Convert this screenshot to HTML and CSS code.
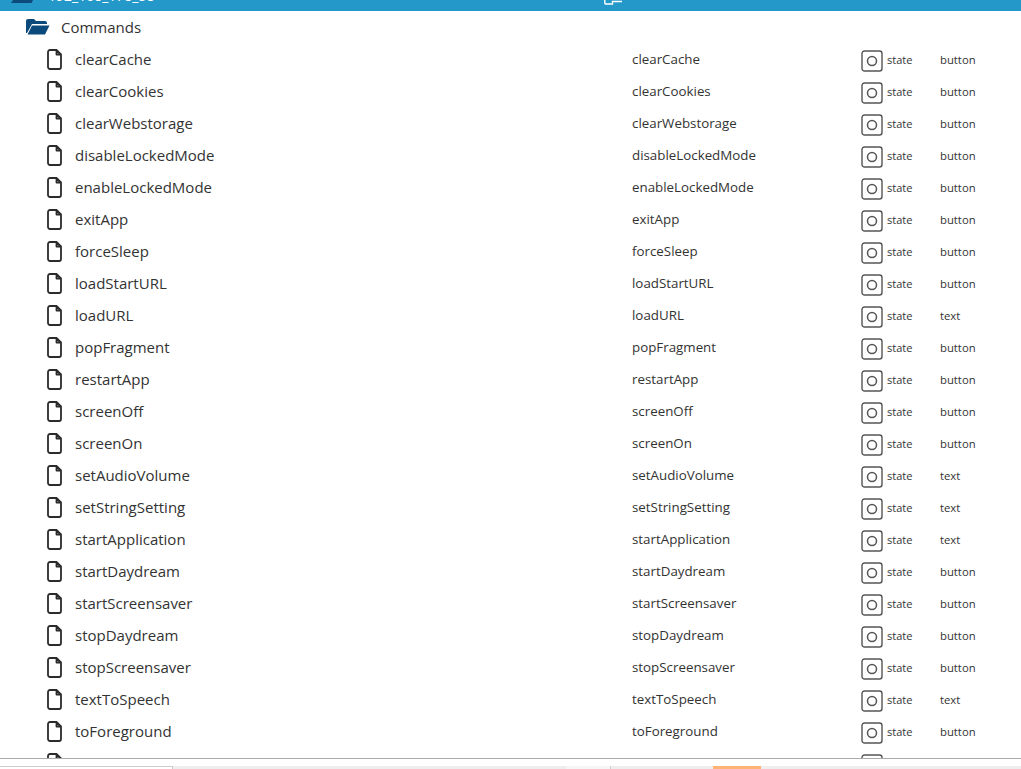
FILE: index.html
```html
<!DOCTYPE html>
<html lang="en">
<head>
<meta charset="utf-8">
<title>Commands</title>
<link rel="stylesheet" href="styles.css">
</head>
<body>
<svg class="defs" width="0" height="0">
  <symbol id="file" viewBox="0 0 15 21"><path d="M3 1H9.500L14 5.500V18A2 2 0 0 1 12 20H3A2 2 0 0 1 1 18V3A2 2 0 0 1 3 1Z M9.500 1V5.500H14" fill="none" stroke="#2b2b2b" stroke-width="1.8" stroke-linejoin="round"/></symbol>
  <symbol id="stateicon" viewBox="0 0 22 22"><rect x="1" y="1" width="20" height="20" rx="2.5" fill="none" stroke="#555" stroke-width="1.4"/><circle cx="11" cy="11" r="4.5" fill="none" stroke="#555" stroke-width="1.5"/></symbol>
</svg>
<header class="topbar">
  <svg class="top-folder" viewBox="0 0 23 3"><path d="M3 0H23L21.500 3H1Z" fill="#0d4a7c"/></svg>
  <span class="top-id">192_168_178_58</span>
  <svg class="top-copy" viewBox="0 0 18 5"><path d="M.8 0V3A1 1 0 0 0 1.800 4H8.500V1.500H18" fill="none" stroke="#fff" stroke-width="1.400"/></svg>
</header>
<main class="tree">
  <div class="folder-row">
    <svg class="folder-icon" viewBox="0 0 25 18"><path d="M1 15V3A2 2 0 0 1 3 1H9L11 3H20A2 2 0 0 1 22 5V6H7L2 15Z" fill="#0d4a7c"/><path d="M7 7.500H24.500L20 16.500H2.500Z" fill="#0d4a7c"/></svg>
    <span>Commands</span>
  </div>
  <div class="row"><svg class="file"><use href="#file"/></svg><span class="name">clearCache</span><span class="title">clearCache</span><svg class="state-icon"><use href="#stateicon"/></svg><span class="role">state</span><span class="type">button</span></div>
  <div class="row"><svg class="file"><use href="#file"/></svg><span class="name">clearCookies</span><span class="title">clearCookies</span><svg class="state-icon"><use href="#stateicon"/></svg><span class="role">state</span><span class="type">button</span></div>
  <div class="row"><svg class="file"><use href="#file"/></svg><span class="name">clearWebstorage</span><span class="title">clearWebstorage</span><svg class="state-icon"><use href="#stateicon"/></svg><span class="role">state</span><span class="type">button</span></div>
  <div class="row"><svg class="file"><use href="#file"/></svg><span class="name">disableLockedMode</span><span class="title">disableLockedMode</span><svg class="state-icon"><use href="#stateicon"/></svg><span class="role">state</span><span class="type">button</span></div>
  <div class="row"><svg class="file"><use href="#file"/></svg><span class="name">enableLockedMode</span><span class="title">enableLockedMode</span><svg class="state-icon"><use href="#stateicon"/></svg><span class="role">state</span><span class="type">button</span></div>
  <div class="row"><svg class="file"><use href="#file"/></svg><span class="name">exitApp</span><span class="title">exitApp</span><svg class="state-icon"><use href="#stateicon"/></svg><span class="role">state</span><span class="type">button</span></div>
  <div class="row"><svg class="file"><use href="#file"/></svg><span class="name">forceSleep</span><span class="title">forceSleep</span><svg class="state-icon"><use href="#stateicon"/></svg><span class="role">state</span><span class="type">button</span></div>
  <div class="row"><svg class="file"><use href="#file"/></svg><span class="name">loadStartURL</span><span class="title">loadStartURL</span><svg class="state-icon"><use href="#stateicon"/></svg><span class="role">state</span><span class="type">button</span></div>
  <div class="row"><svg class="file"><use href="#file"/></svg><span class="name">loadURL</span><span class="title">loadURL</span><svg class="state-icon"><use href="#stateicon"/></svg><span class="role">state</span><span class="type">text</span></div>
  <div class="row"><svg class="file"><use href="#file"/></svg><span class="name">popFragment</span><span class="title">popFragment</span><svg class="state-icon"><use href="#stateicon"/></svg><span class="role">state</span><span class="type">button</span></div>
  <div class="row"><svg class="file"><use href="#file"/></svg><span class="name">restartApp</span><span class="title">restartApp</span><svg class="state-icon"><use href="#stateicon"/></svg><span class="role">state</span><span class="type">button</span></div>
  <div class="row"><svg class="file"><use href="#file"/></svg><span class="name">screenOff</span><span class="title">screenOff</span><svg class="state-icon"><use href="#stateicon"/></svg><span class="role">state</span><span class="type">button</span></div>
  <div class="row"><svg class="file"><use href="#file"/></svg><span class="name">screenOn</span><span class="title">screenOn</span><svg class="state-icon"><use href="#stateicon"/></svg><span class="role">state</span><span class="type">button</span></div>
  <div class="row"><svg class="file"><use href="#file"/></svg><span class="name">setAudioVolume</span><span class="title">setAudioVolume</span><svg class="state-icon"><use href="#stateicon"/></svg><span class="role">state</span><span class="type">text</span></div>
  <div class="row"><svg class="file"><use href="#file"/></svg><span class="name">setStringSetting</span><span class="title">setStringSetting</span><svg class="state-icon"><use href="#stateicon"/></svg><span class="role">state</span><span class="type">text</span></div>
  <div class="row"><svg class="file"><use href="#file"/></svg><span class="name">startApplication</span><span class="title">startApplication</span><svg class="state-icon"><use href="#stateicon"/></svg><span class="role">state</span><span class="type">text</span></div>
  <div class="row"><svg class="file"><use href="#file"/></svg><span class="name">startDaydream</span><span class="title">startDaydream</span><svg class="state-icon"><use href="#stateicon"/></svg><span class="role">state</span><span class="type">button</span></div>
  <div class="row"><svg class="file"><use href="#file"/></svg><span class="name">startScreensaver</span><span class="title">startScreensaver</span><svg class="state-icon"><use href="#stateicon"/></svg><span class="role">state</span><span class="type">button</span></div>
  <div class="row"><svg class="file"><use href="#file"/></svg><span class="name">stopDaydream</span><span class="title">stopDaydream</span><svg class="state-icon"><use href="#stateicon"/></svg><span class="role">state</span><span class="type">button</span></div>
  <div class="row"><svg class="file"><use href="#file"/></svg><span class="name">stopScreensaver</span><span class="title">stopScreensaver</span><svg class="state-icon"><use href="#stateicon"/></svg><span class="role">state</span><span class="type">button</span></div>
  <div class="row"><svg class="file"><use href="#file"/></svg><span class="name">textToSpeech</span><span class="title">textToSpeech</span><svg class="state-icon"><use href="#stateicon"/></svg><span class="role">state</span><span class="type">text</span></div>
  <div class="row"><svg class="file"><use href="#file"/></svg><span class="name">toForeground</span><span class="title">toForeground</span><svg class="state-icon"><use href="#stateicon"/></svg><span class="role">state</span><span class="type">button</span></div>
  <div class="row"><svg class="file"><use href="#file"/></svg><span class="name">toBackground</span><span class="title">toBackground</span><svg class="state-icon"><use href="#stateicon"/></svg><span class="role">state</span><span class="type">button</span></div>
</main>
<footer class="bottombar">
  <div class="tab-first"></div>
  <div class="tab-strip">
    <div class="tab tab-grey"></div>
    <div class="tab tab-pale"></div>
    <div class="tab tab-grey2"></div>
    <div class="tab tab-active"></div>
  </div>
</footer>
</body>
</html>
```

FILE: styles.css
```css
html, body {
  margin: 0;
  padding: 0;
  height: 769px;
  overflow: hidden;
  background: #fff;
  font-family: "Open Sans", "Noto Sans", sans-serif;
  color: #333;
}
.defs { position: absolute; }
body {
  display: flex;
  flex-direction: column;
}
.topbar {
  flex: none;
  height: 11px;
  background: #2499c9;
  display: flex;
  align-items: flex-start;
  overflow: hidden;
  color: #fff;
}
.top-folder {
  flex: none;
  width: 23px;
  height: 3px;
  margin-left: 10px;
}
.top-id {
  flex: none;
  width: 556px;
  margin-left: 15px;
  margin-top: -14px;
  font-size: 14px;
  line-height: 20px;
}
.top-copy {
  flex: none;
  width: 18px;
  height: 5px;
}
.tree {
  flex: 1;
  min-height: 0;
  overflow: hidden;
}
.folder-row {
  height: 32px;
  display: flex;
  align-items: center;
  padding-left: 25px;
  font-size: 15px;
  box-sizing: border-box;
}
.folder-icon {
  width: 25px;
  height: 18px;
  margin-right: 11px;
}
.row {
  height: 32px;
  display: flex;
  align-items: center;
  padding-left: 47px;
}
.file {
  flex: none;
  width: 15px;
  height: 21px;
  margin-right: 13px;
}
.name {
  flex: none;
  width: 557px;
  font-size: 15px;
}
.title {
  flex: none;
  width: 229px;
  font-size: 13.333px;
}
.state-icon {
  flex: none;
  width: 22px;
  height: 22px;
  margin-top: 4px;
  margin-right: 4px;
}
.role {
  flex: none;
  width: 53px;
  font-size: 11px;
}
.type {
  flex: none;
  font-size: 11.300px;
}
.bottombar {
  flex: none;
  height: 11px;
  border-top: 1px solid #aaa;
  box-sizing: border-box;
  display: flex;
  padding-top: 7px;
  background: #fff;
}
.tab-first {
  width: 172px;
  border-top: 1px solid #ccc;
  border-right: 1px solid #ccc;
}
.tab-strip {
  flex: 1;
  display: flex;
  background: #eee;
}
.tab-grey { width: 393px; }
.tab-pale {
  width: 44px;
  background: #f6f6f6;
  border-right: 1px solid #ccc;
}
.tab-grey2 { width: 102px; }
.tab-active {
  width: 48px;
  background: #ffb374;
}
```
